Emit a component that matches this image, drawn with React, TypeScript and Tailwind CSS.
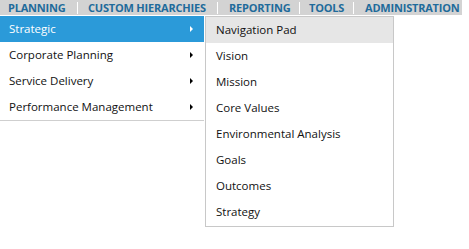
import React from "react";

const topItems = [
  { label: "PLANNING", cls: "w-[77px] pl-2" },
  { label: "CUSTOM HIERARCHIES", cls: "w-[139px] pl-[10px]" },
  { label: "REPORTING", cls: "w-[81px] pl-[11px]" },
  { label: "TOOLS", cls: "w-[53px] pl-[9px]" },
  { label: "ADMINISTRATION", cls: "w-[108px] pl-[11px]" },
];

const mainItems = ["Strategic", "Corporate Planning", "Service Delivery", "Performance Management"];

const subItems = [
  "Navigation Pad",
  "Vision",
  "Mission",
  "Core Values",
  "Environmental Analysis",
  "Goals",
  "Outcomes",
  "Strategy",
];

const Arrow: React.FC<{ white?: boolean }> = ({ white }) => (
  <span
    className={`block w-0 h-0 border-y-[3px] border-y-transparent border-l-[3px] ${
      white ? "border-l-white" : "border-l-black"
    }`}
  />
);

export default function App() {
  return (
    <div className="w-[469px] h-[249px] bg-white font-['Open_Sans',sans-serif] overflow-hidden">
      {/* top bar */}
      <div className="w-[462px] h-[15px] bg-[#d3d3d3] flex items-center">
        {topItems.map((item, i) => (
          <React.Fragment key={item.label}>
            {i > 0 && <span className="w-px h-[12px] bg-white shrink-0" />}
            <span
              className={`whitespace-nowrap shrink-0 text-[11px] font-bold leading-none text-[#1f6b9b] tracking-[-0.2px] ${item.cls}`}
            >
              {item.label}
            </span>
          </React.Fragment>
        ))}
      </div>

      <div className="flex items-start mt-px text-[11.5px] text-[#111]">
        {/* main dropdown */}
        <div className="w-[204px] border-b border-[#cfcfcf] bg-white">
          {mainItems.map((item, i) => (
            <div
              key={item}
              className={`h-[26px] flex items-center justify-between pl-[9px] pr-[11px] ${
                i === 0 ? "bg-[#2b9ad9] text-white" : ""
              }`}
            >
              <span>{item}</span>
              <Arrow white={i === 0} />
            </div>
          ))}
        </div>

        {/* flyout */}
        <div className="ml-px w-[189px] border border-[#c8c8c8] bg-white pb-px">
          {subItems.map((item, i) => (
            <div
              key={item}
              className={`h-[26px] flex items-center pl-[10px] ${i === 0 ? "bg-[#e6e6e6]" : ""}`}
            >
              {item}
            </div>
          ))}
        </div>
      </div>
    </div>
  );
}
